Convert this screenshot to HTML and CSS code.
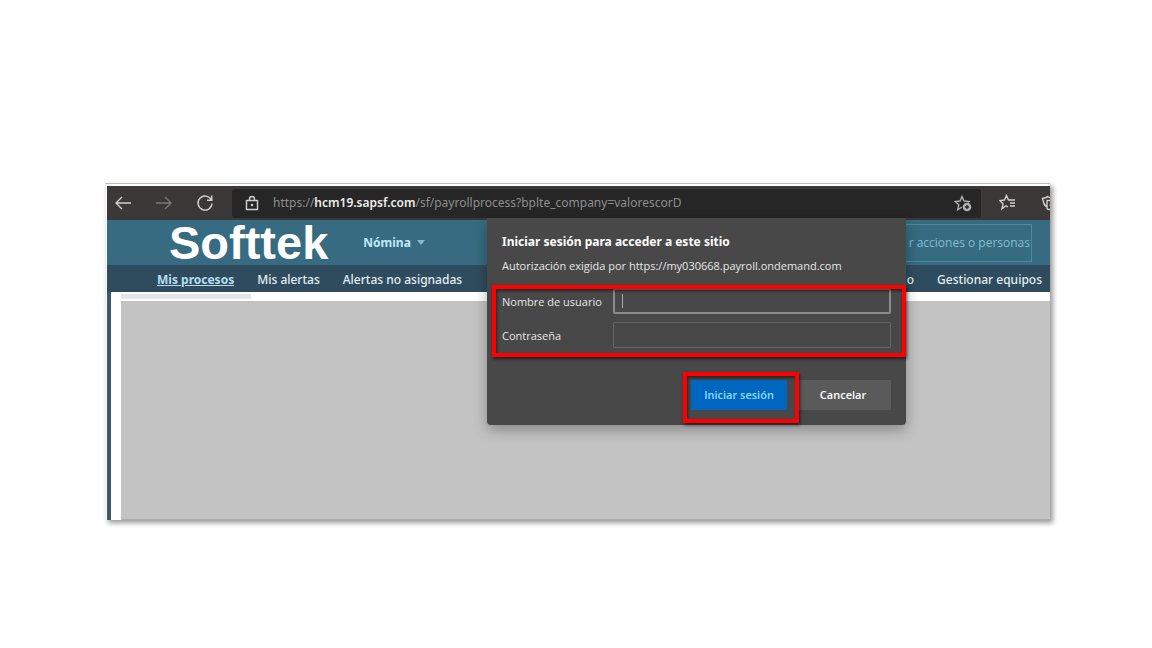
FILE: index.html
```html
<!DOCTYPE html>
<html lang="es">
<head>
<meta charset="utf-8">
<meta name="viewport" content="width=device-width, initial-scale=1">
<title>Nómina</title>
<link rel="stylesheet" href="styles.css">
</head>
<body>
<main class="frame">
  <div class="browser">
    <div class="toolbar">
      <div class="tools">
        <button class="icon-btn" aria-label="Atrás"><svg width="18" height="18" viewBox="0 0 18 18"><path d="M17 9H2M8 3L2 9l6 6"/></svg></button>
        <button class="icon-btn dim" aria-label="Adelante"><svg width="18" height="18" viewBox="0 0 18 18"><path d="M1 9h15M10 3l6 6-6 6"/></svg></button>
        <button class="icon-btn" aria-label="Actualizar"><svg width="18" height="18" viewBox="0 0 18 18"><path d="M15.300 6A7 7 0 1 0 16 9.500M15.800 1.500V6.200H11"/></svg></button>
      </div>
      <div class="address">
        <svg class="lock" width="14" height="16" viewBox="0 0 14 16"><path d="M1.500 5.500h11v9h-11zM4.500 5.500V4a2.500 2.500 0 0 1 5 0v1.500"/><circle cx="7" cy="10" r=".6"/></svg>
        <span class="url">https://<b>hcm19.sapsf.com</b>/sf/payrollprocess?bplte_company=valorescorD</span>
        <button class="icon-btn star" aria-label="Agregar a favoritos"><svg width="18" height="18" viewBox="0 0 18 18"><path d="M8 13l-4.300 2.800 1.100-5L1 7.500l5-.5L8 2.500 10 7l5 .5-1 1"/><circle cx="13" cy="13" r="4.300" class="solid"/><path class="cut" d="M13 11v4M11 13h4"/></svg></button>
      </div>
      <div class="extras">
        <button class="icon-btn" aria-label="Favoritos"><svg width="18" height="18" viewBox="0 0 18 18"><path d="M9 13l-2-1.200-4 3 1-5L1 6.500l4.500-.5L7.500 1.500 9.500 6H16M11 9h5M11 12h5"/></svg></button>
        <button class="icon-btn" aria-label="Colecciones"><svg width="18" height="18" viewBox="0 0 18 18"><path d="M6 12.500C4 12 3 10.500 2.500 8L1.500 4.500Q5 4 6.500 2.500Q9 4 13 4M6 6.500h10v9H8a2 2 0 0 1-2-2zM8.500 11h5M11 8.500v5"/></svg></button>
      </div>
    </div>

    <header class="header">
      <div class="logo">Softtek</div>
      <button class="module">Nómina<span class="caret"></span></button>
      <input class="search" type="text" aria-label="Buscar" placeholder="r acciones o personas">
    </header>
    <nav class="nav">
      <div class="nav-group">
        <a class="current" href="#">Mis procesos</a>
        <a href="#">Mis alertas</a>
        <a href="#">Alertas no asignadas</a>
      </div>
      <div class="nav-group">
        <a href="#">o</a>
        <a href="#">Gestionar equipos</a>
      </div>
    </nav>
    <section class="page">
      <div class="tab-strip"></div>
      <div class="canvas"></div>
    </section>

    <form class="dialog">
      <h1 class="title">Iniciar sesión para acceder a este sitio</h1>
      <p class="subtitle">Autorización exigida por https://my030668.payroll.ondemand.com</p>
      <div class="fields">
        <label for="user">Nombre de usuario</label>
        <div class="box focused"><span class="cursor"></span><input id="user" type="text"></div>
        <label for="pass">Contraseña</label>
        <div class="box"><input id="pass" type="password"></div>
      </div>
      <div class="actions">
        <button class="btn primary" type="button">Iniciar sesión</button>
        <button class="btn" type="button">Cancelar</button>
      </div>
    </form>
  </div>
</main>
</body>
</html>
```
FILE: styles.css
```css
* { box-sizing: border-box; }

body {
  margin: 0;
  min-height: 100vh;
  padding: 183px 102px 40px 105px;
  background: #fff;
  font-family: "Noto Sans", "Open Sans", sans-serif;
  font-size: 12px;
}

button, input { font: inherit; color: inherit; }

.frame {
  border-top: 1px solid #bdbdbd;
  border-left: 1px solid #ececec;
  padding: 2px 0 0 1px;
  box-shadow: 3px 3px 5px rgba(0, 0, 0, .4);
  background: #fff;
}

.browser {
  position: relative;
  display: flex;
  flex-direction: column;
  min-height: 334px;
}

/* Browser chrome */
.toolbar {
  display: flex;
  align-items: center;
  height: 34px;
  background: #3a3938;
  overflow: hidden;
}

.tools {
  display: flex;
  flex: none;
  gap: 23px;
  padding: 0 18px 0 7px;
}

.icon-btn {
  flex: none;
  display: flex;
  padding: 0;
  border: 0;
  background: none;
  color: #d0d0d0;
}

.icon-btn.dim { color: #777; }

.icon-btn svg, .lock {
  fill: none;
  stroke: currentColor;
  stroke-width: 1.4;
}

.icon-btn.star { color: #b0b0b0; }
.icon-btn .solid { fill: currentColor; stroke: none; }
.icon-btn .cut { stroke: #262626; }

.address {
  flex: 1;
  min-width: 0;
  display: flex;
  align-items: center;
  gap: 14px;
  height: 29px;
  padding: 0 9px 0 13px;
  border-radius: 3px;
  background: #262626;
  color: #d0d0d0;
}

.lock { flex: none; }

.url {
  flex: 1;
  min-width: 0;
  overflow: hidden;
  line-height: 18px;
  padding-bottom: 1px;
  white-space: nowrap;
  color: #8e8e8e;
}

.url b { font-weight: 600; color: #eee; }

.extras {
  display: flex;
  flex: none;
  width: 69px;
  gap: 24px;
  padding-left: 18px;
  overflow: hidden;
}

/* Application header */
.header {
  display: flex;
  align-items: center;
  height: 45px;
  padding: 0 18px 0 62px;
  background: #366b81;
}

.logo {
  color: #fff;
  font: bold 47px/44px "Liberation Sans", Arial, sans-serif;
}

.module {
  display: flex;
  align-items: center;
  gap: 6px;
  margin-left: 35px;
  padding: 0;
  border: 0;
  background: none;
  color: #c3e8f5;
  font-weight: 700;
}

.caret {
  border: 4px solid transparent;
  border-top: 5px solid #8bb9c9;
  border-bottom: 0;
}

.search {
  width: 128px;
  height: 38px;
  margin-left: auto;
  padding: 0 1px 0 0;
  border: 1px solid #5088a0;
  border-left: 0;
  background: none;
  font-family: "Open Sans", sans-serif;
  text-align: right;
}

.search::placeholder { color: #83bdd0; opacity: 1; }

.nav {
  display: flex;
  justify-content: space-between;
  align-items: center;
  height: 27px;
  padding: 2px 8px 0 50px;
  background: #2f4c5e;
}

.nav-group { display: flex; gap: 23px; }

.nav a {
  color: #e3edf2;
  font-weight: 500;
  line-height: 18px;
  text-decoration: none;
  white-space: nowrap;
}

.nav .current {
  color: #b7dcf0;
  font-weight: 700;
  text-decoration: underline;
}

.page {
  flex: 1;
  display: flex;
  flex-direction: column;
  border-left: 4px solid #3b596a;
  background: #fff;
  padding: 2px 0 0 10px;
}

.tab-strip {
  width: 130px;
  height: 5px;
  background: #e3e5e8;
}

.canvas {
  flex: 1;
  margin-top: 2px;
  border-bottom: 1px solid #adadad;
  background: #c3c3c3;
}

/* Sign-in dialog */
.dialog {
  position: absolute;
  top: 32px;
  left: 380px;
  width: 419px;
  padding: 14px 15px 15px;
  border-radius: 0 0 4px 4px;
  background: #484848;
  box-shadow: 0 5px 14px rgba(0, 0, 0, .3);
  color: #e6e6e6;
  font-family: "Open Sans", sans-serif;
  font-size: 11px;
}

.title {
  margin: 0;
  color: #fff;
  font-family: "Noto Sans", sans-serif;
  font-size: 12px;
  font-weight: 700;
  line-height: 20px;
}

.subtitle {
  margin: 5px 0 0;
  line-height: 18px;
}

.fields {
  position: relative;
  display: grid;
  grid-template-columns: 104px 1fr;
  column-gap: 7px;
  row-gap: 8px;
  align-items: center;
  margin-top: 13px;
}

.fields::after, .primary::after {
  content: "";
  position: absolute;
  border: 4px solid #f00;
  box-shadow: 1px 2px 3px rgba(0, 0, 0, .6), inset 1px 2px 3px rgba(0, 0, 0, .5);
  pointer-events: none;
}

.fields::after { inset: -3px -15px -9px -10px; }
.primary::after { inset: -8px -12px -13px -8px; }

.box {
  display: flex;
  align-items: center;
  height: 26px;
  padding: 0 7px;
  border: 1px solid #666;
  border-radius: 2px;
}

.box.focused { border: 2px solid #8a8a8a; }

.box input {
  flex: 1;
  min-width: 0;
  padding: 0;
  border: 0;
  outline: 0;
  background: none;
}

.cursor { width: 1px; height: 14px; background: #aaa; }

.actions {
  display: flex;
  justify-content: flex-end;
  gap: 8px;
  margin-top: 32px;
}

.btn {
  position: relative;
  width: 96px;
  height: 30px;
  padding: 0 0 1px;
  border: 0;
  background: #5a5a5a;
  color: #fff;
  font-weight: 600;
}

.primary { z-index: 1; background: #0067c0; color: #8fdcff; }
```
